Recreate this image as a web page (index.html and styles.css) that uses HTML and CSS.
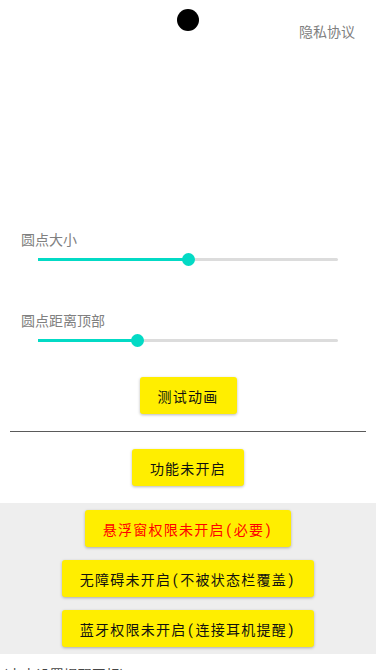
FILE: index.html
```html
<!DOCTYPE html>
<html lang="zh">
<head>
<meta charset="utf-8">
<link rel="stylesheet" href="styles.css">
</head>
<body>
<div class="header">
  <div class="dot"></div>
  <div class="privacy">隐私协议</div>
</div>
<div class="label">圆点大小</div>
<div class="slider">
  <div class="track">
    <div class="fill" style="width:50%"><span class="thumb"></span></div>
  </div>
</div>
<div class="label label2">圆点距离顶部</div>
<div class="slider">
  <div class="track">
    <div class="fill" style="width:33.3%"><span class="thumb"></span></div>
  </div>
</div>
<div class="row first"><button class="btn">测试动画</button></div>
<hr class="divider">
<div class="row second"><button class="btn">功能未开启</button></div>
<div class="perms">
  <button class="btn red">悬浮窗权限未开启<span class="p">(</span>必要<span class="p">)</span></button>
  <button class="btn">无障碍未开启<span class="p">(</span>不被状态栏覆盖<span class="p">)</span></button>
  <button class="btn">蓝牙权限未开启<span class="p">(</span>连接耳机提醒<span class="p">)</span></button>
</div>
<div class="footer">(点击设置提醒图标)</div>
</body>
</html>
```
FILE: styles.css
```css
html, body {
  margin: 0;
  padding: 0;
  background: #ffffff;
  font-family: "Noto Sans CJK SC", "Noto Sans", sans-serif;
  width: 376px;
  overflow: hidden;
}
.header {
  height: 229px;
  display: grid;
  grid-template-columns: 1fr auto 1fr;
  align-items: start;
}
.dot {
  grid-column: 2;
  width: 22px;
  height: 22px;
  border-radius: 50%;
  background: #000;
  margin-top: 9px;
}
.privacy {
  grid-column: 3;
  justify-self: end;
  margin-top: 21px;
  margin-right: 21px;
  font-size: 14px;
  line-height: 20px;
  color: #808080;
}
.label {
  margin-left: 21px;
  font-size: 14px;
  line-height: 20px;
  height: 20px;
  color: #808080;
}
.label2 {
  margin-top: 41px;
}
.slider {
  height: 20px;
  display: flex;
  align-items: center;
  padding: 0 38px;
}
.track {
  flex: 1;
  height: 3px;
  background: #dcdcdc;
  border-radius: 2px;
  display: flex;
}
.fill {
  height: 3px;
  background: #03dac5;
  position: relative;
}
.thumb {
  position: absolute;
  right: -6.5px;
  top: -5px;
  width: 13px;
  height: 13px;
  border-radius: 50%;
  background: #03dac5;
}
.row {
  display: flex;
  justify-content: center;
}
.first { margin-top: 27px; }
.second { margin-top: 17px; }
.divider {
  margin: 17px 10px 0;
  border: 0;
  height: 1px;
  background: #5a5a5a;
}
.btn {
  height: 37px;
  padding: 0 18px;
  border: 0;
  border-radius: 3px;
  background: #ffee00;
  color: #111;
  font-family: Roboto, "Noto Sans CJK SC", sans-serif;
  font-size: 14px;
  letter-spacing: 1.25px;
  box-shadow: 0 1px 3px rgba(0,0,0,0.28);
}
.btn .p {
  padding: 0 1.5px;
}
.red { color: #ff0000; }
.perms {
  margin-top: 17px;
  background: #eeeeee;
  padding: 7px 0;
  display: flex;
  flex-direction: column;
  align-items: center;
  gap: 13px;
}
.footer {
  margin-top: 10px;
  margin-left: 3px;
  font-size: 14px;
  line-height: 20px;
  color: #444;
}
```
